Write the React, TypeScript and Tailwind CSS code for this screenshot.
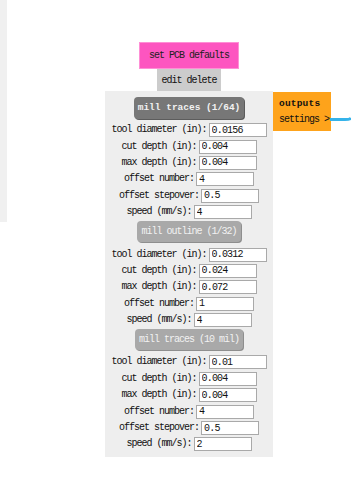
import React from 'react';

const mono = { fontFamily: '"Liberation Mono", "DejaVu Sans Mono", monospace' };

type Field = { label: string; value: string };

const sections: { title: string; dark: boolean; fields: Field[] }[] = [
  {
    title: 'mill traces (1/64)',
    dark: true,
    fields: [
      { label: 'tool diameter (in):', value: '0.0156' },
      { label: 'cut depth (in):', value: '0.004' },
      { label: 'max depth (in):', value: '0.004' },
      { label: 'offset number:', value: '4' },
      { label: 'offset stepover:', value: '0.5' },
      { label: 'speed (mm/s):', value: '4' },
    ],
  },
  {
    title: 'mill outline (1/32)',
    dark: false,
    fields: [
      { label: 'tool diameter (in):', value: '0.0312' },
      { label: 'cut depth (in):', value: '0.024' },
      { label: 'max depth (in):', value: '0.072' },
      { label: 'offset number:', value: '1' },
      { label: 'speed (mm/s):', value: '4' },
    ],
  },
  {
    title: 'mill traces (10 mil)',
    dark: false,
    fields: [
      { label: 'tool diameter (in):', value: '0.01' },
      { label: 'cut depth (in):', value: '0.004' },
      { label: 'max depth (in):', value: '0.004' },
      { label: 'offset number:', value: '4' },
      { label: 'offset stepover:', value: '0.5' },
      { label: 'speed (mm/s):', value: '2' },
    ],
  },
];

function Row({ label, value }: Field) {
  return (
    <div className="flex items-center justify-center gap-[2px] h-[16.4px]">
      <span className="text-[10px] tracking-[-1px] text-[#111] whitespace-pre leading-none">{label}</span>
      <input
        readOnly
        defaultValue={value}
        style={mono}
        className="w-[58px] h-[14px] border border-[#a9a9a9] bg-white px-[2px] text-[10px] tracking-[-0.8px] text-[#111] outline-none leading-none"
      />
    </div>
  );
}

export default function App() {
  return (
    <div className="relative w-[351px] h-[479px] bg-white overflow-hidden" style={mono}>
      {/* left edge strip */}
      <div className="absolute left-0 top-0 w-[7px] h-[222px] bg-[#f0f0f0]" />

      {/* node */}
      <div className="absolute left-[105px] top-[42px] w-[168px] flex flex-col items-center">
        <div className="h-[27px] px-[9px] flex items-center bg-[#fd55c0] border border-[#ff8fd6] text-[10px] tracking-[-1px] text-[#222]">
          set PCB defaults
        </div>
        <div className="h-[22px] w-[64px] flex items-center justify-center bg-[#cccccc] text-[10px] tracking-[-1px] text-[#111]">
          edit delete
        </div>

        <div className="w-[168px] bg-[#eeeeee] flex flex-col items-center pt-[6px] pb-[4px]">
          {sections.map((s, i) => (
            <div key={i} className="flex flex-col items-center w-full">
              <div
                className={
                  s.dark
                    ? 'h-[22px] px-[4px] flex items-center rounded-[4px] bg-[#777777] shadow-[1px_1px_0_#5c5c5c] text-[9.5px] font-bold text-[#f2f2f2] mb-[3px]'
                    : 'h-[21px] px-[4px] flex items-center rounded-[4px] bg-[#a9a9a9] shadow-[1px_1px_0_#8e8e8e] text-[10px] tracking-[-1px] text-[#f2f2f2] mb-[4px] mt-[1px]'
                }
              >
                {s.title}
              </div>
              {s.fields.map((f, j) => (
                <Row key={j} {...f} />
              ))}
            </div>
          ))}
        </div>
      </div>

      {/* outputs node */}
      <div className="absolute left-[273px] top-[92px] w-[58px] h-[39px] bg-[#fea31b] pl-[6px] pt-[7px] flex flex-col gap-[6px]">
        <span className="text-[9.5px] font-bold text-[#111] leading-none tracking-[0.2px]">outputs</span>
        <span className="text-[10px] tracking-[-1px] text-[#111] leading-none">settings &gt;</span>
      </div>

      {/* wire */}
      <svg className="absolute left-[330px] top-[112px]" width="21" height="12" viewBox="0 0 21 12">
        <path d="M0 7.5 L15 7.5 Q20 7.5 21 6" stroke="#35b3ea" strokeWidth="3" fill="none" />
      </svg>
    </div>
  );
}
